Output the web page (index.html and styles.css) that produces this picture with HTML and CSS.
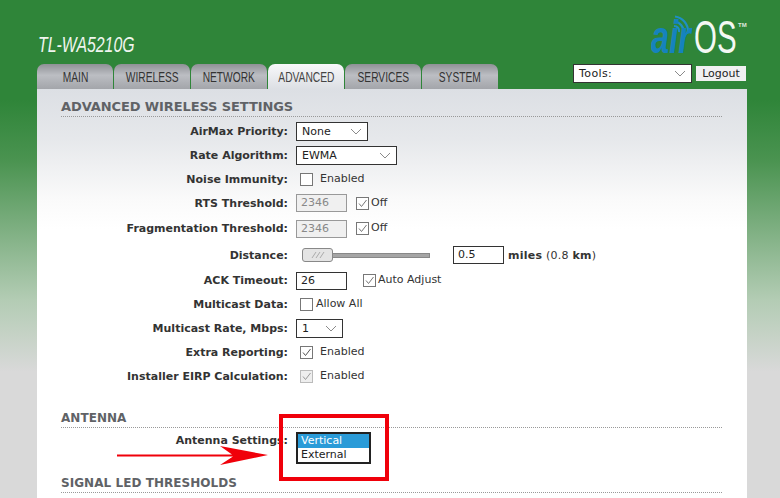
FILE: index.html
```html
<!DOCTYPE html>
<html lang="en">
<head>
<meta charset="utf-8">
<title>airOS - Advanced</title>
<link rel="stylesheet" href="styles.css">
</head>
<body>
<div class="page">
  <header class="header">
    <div class="device"><span class="device-text">TL-WA5210G</span></div>
    <div class="logo">
      <svg class="waves" width="20" height="22" viewBox="0 0 20 22"><g fill="none" stroke="#1f8fc4" stroke-width="2.2"><path d="M2 12a5 5 0 0 1 5 6"/><path d="M2 7.500a10 10 0 0 1 9.500 11"/><path d="M3 2.500a15 15 0 0 1 13 15"/></g></svg>
      <span class="logo-air"><span class="logo-air-text">air</span></span><span class="logo-os"><span class="logo-os-text">OS</span></span><span class="logo-tm">TM</span>
    </div>
  </header>
  <div class="nav">
    <div class="tabs">
      <div class="tab"><span>MAIN</span></div>
      <div class="tab"><span>WIRELESS</span></div>
      <div class="tab"><span>NETWORK</span></div>
      <div class="tab tab-active"><span>ADVANCED</span></div>
      <div class="tab"><span>SERVICES</span></div>
      <div class="tab"><span>SYSTEM</span></div>
    </div>
    <div class="tools">
      <div class="select select-tools"><span class="tools-text">Tools:</span><svg class="chev" width="12" height="7" viewBox="0 0 12 7"><path d="M1 1l5 5 5-5" fill="none" stroke="#8a8a8a"/></svg></div>
      <div class="logout">Logout</div>
    </div>
  </div>
  <main class="panel">
    <h2 class="section">ADVANCED WIRELESS SETTINGS</h2>
    <div class="rows">
      <div class="row r24"><label class="lbl">AirMax Priority:</label><div class="ctl"><div class="select s-none">None<svg class="chev" width="12" height="7" viewBox="0 0 12 7"><path d="M1 1l5 5 5-5" fill="none" stroke="#8a8a8a"/></svg></div></div></div>
      <div class="row r24"><label class="lbl">Rate Algorithm:</label><div class="ctl"><div class="select s-ewma">EWMA<svg class="chev" width="12" height="7" viewBox="0 0 12 7"><path d="M1 1l5 5 5-5" fill="none" stroke="#8a8a8a"/></svg></div></div></div>
      <div class="row r24"><label class="lbl">Noise Immunity:</label><div class="ctl ind"><span class="check"></span><span class="opt gap7">Enabled</span></div></div>
      <div class="row r24"><label class="lbl">RTS Threshold:</label><div class="ctl"><div class="input disabled">2346</div><span class="check on ml9"><svg width="11" height="11" viewBox="0 0 11 11"><path d="M2 5.500l2.500 3L9.500 2" fill="none" stroke="#777"/></svg></span><span class="opt gap2">Off</span></div></div>
      <div class="row r27"><label class="lbl">Fragmentation Threshold:</label><div class="ctl"><div class="input disabled">2346</div><span class="check on ml9"><svg width="11" height="11" viewBox="0 0 11 11"><path d="M2 5.500l2.500 3L9.500 2" fill="none" stroke="#777"/></svg></span><span class="opt gap2">Off</span></div></div>
      <div class="row r26"><label class="lbl">Distance:</label><div class="ctl slider-ctl">
        <div class="slider"><div class="track"></div><div class="thumb"><svg width="16" height="8" viewBox="0 0 16 8"><path d="M2 7l4-6M6 7l4-6M10 7l4-6" stroke="#aaa" fill="none"/></svg></div></div>
        <div class="input dist">0.5</div><span class="dist-note"><b>miles</b> (0.8 <b>km</b>)</span></div></div>
      <div class="row r25"><label class="lbl">ACK Timeout:</label><div class="ctl"><div class="input ack">26</div><span class="check on ml16"><svg width="11" height="11" viewBox="0 0 11 11"><path d="M2 5.500l2.500 3L9.500 2" fill="none" stroke="#777"/></svg></span><span class="opt gap2">Auto Adjust</span></div></div>
      <div class="row r23"><label class="lbl">Multicast Data:</label><div class="ctl ind"><span class="check"></span><span class="opt gap3">Allow All</span></div></div>
      <div class="row r24"><label class="lbl">Multicast Rate, Mbps:</label><div class="ctl"><div class="select s-rate">1<svg class="chev" width="12" height="7" viewBox="0 0 12 7"><path d="M1 1l5 5 5-5" fill="none" stroke="#8a8a8a"/></svg></div></div></div>
      <div class="row r24"><label class="lbl">Extra Reporting:</label><div class="ctl ind"><span class="check on"><svg width="11" height="11" viewBox="0 0 11 11"><path d="M2 5.500l2.500 3L9.500 2" fill="none" stroke="#555"/></svg></span><span class="opt gap7">Enabled</span></div></div>
      <div class="row r24"><label class="lbl">Installer EIRP Calculation:</label><div class="ctl ind"><span class="check on dis"><svg width="11" height="11" viewBox="0 0 11 11"><path d="M2 5.500l2.500 3L9.500 2" fill="none" stroke="#999"/></svg></span><span class="opt gap7">Enabled</span></div></div>
    </div>
    <h2 class="section sec-small sec-antenna">ANTENNA</h2>
    <div class="row r-ant"><label class="lbl lbl-ant">Antenna Settings:</label><div class="ctl ctl-ant">
      <div class="listbox"><div class="lb-item lb-sel">Vertical</div><div class="lb-item">External</div></div>
    </div></div>
    <h2 class="section sec-small">SIGNAL LED THRESHOLDS</h2>
  </main>
  <div class="callout"></div>
  <svg class="arrow" width="152" height="20" viewBox="0 0 152 20"><path d="M0 8.500H115L103 0L151 9L103 19L116 10.500H0Z" fill="#f0000a"/></svg>
</div>
</body>
</html>
```
FILE: styles.css
```css
* { box-sizing: border-box; }
html, body { margin: 0; height: 100%; overflow: hidden; }
body {
  font-family: "DejaVu Sans", Verdana, sans-serif;
  font-size: 11px;
  color: #333;
  background: linear-gradient(#2f8539 0, #2f8539 100px, #4a9350 160px, #b3ccb4 300px, #d9d9d9 372px, #d9d9d9 100%);
}
.page { position: relative; width: 780px; height: 498px; padding-left: 37px; overflow: hidden; }
.header { height: 64px; width: 710px; display: flex; justify-content: space-between; align-items: flex-end; }
.device {
  font: italic 22px/24px "Liberation Sans", sans-serif; color: #f0f5ef; margin-left: 1px; margin-bottom: 7px;
}
.device-text { display: inline-block; transform: scaleX(.72); transform-origin: left center; }
.logo { position: relative; display: flex; align-items: baseline; height: 44px; width: 95px; margin-right: 1px; margin-bottom: 5px; }
.waves { position: absolute; left: 21px; top: -1px; }
.logo-air { width: 43px; font: italic bold 46px/44px "Liberation Sans", sans-serif; color: #1583bd; white-space: nowrap; }
.logo-air-text { display: inline-block; transform: scaleX(.71); transform-origin: left center; }
.logo-os { width: 44px; font: 46px/44px "Liberation Sans", sans-serif; color: #f4f8f4; white-space: nowrap; }
.logo-os-text { display: inline-block; transform: scaleX(.64); transform-origin: left center; }
.logo-tm { font: bold 6px/8px "Liberation Sans", sans-serif; color: #dfe8df; align-self: flex-start; margin-top: 6px; }
.nav { height: 25px; width: 710px; display: flex; justify-content: space-between; }
.tabs { display: flex; gap: 1px; }
.tab {
  width: 76px; height: 25px; padding-top: 3px; border-radius: 7px 7px 0 0;
  background: linear-gradient(#8f9196, #bcbec3 45%, #a3a5aa);
  font: 14px/20px "Liberation Sans", sans-serif;
  color: #333; display: flex; justify-content: center; white-space: nowrap;
}
.tab span { display: inline-block; transform: scaleX(.73); }
.tab-active { background: linear-gradient(#f8f8fa, #dcdfe4); color: #444; }
.tools { display: flex; align-items: flex-start; gap: 4px; margin-right: 1px; }
.select {
  display: flex; align-items: center; justify-content: space-between;
  background: #fff; border: 1px solid #333; height: 19px; padding: 0 5px; color: #222;
}
.select-tools { width: 119px; }
.tools-text { letter-spacing: .4px; }
.logout { margin-top: 2px; width: 50px; height: 15px; background: #f0f0f2; color: #222; line-height: 15px; text-align: center; }
.panel {
  width: 710px; height: 420px; padding: 10px 24px 0;
  background: linear-gradient(#dcdfe4 0, #e6e8eb 50px, #fafafa 110px, #fff 140px);
}
.section {
  margin: 0; height: 18px; width: 661px; font-size: 13px; line-height: 16px; font-weight: bold; color: #606266;
  border-bottom: 1px dotted #999; font-family: "DejaVu Sans", sans-serif; letter-spacing: -.1px;
}
.sec-small { font-size: 12px; letter-spacing: .05px; }
.rows { padding-top: 2px; }
.row { display: flex; align-items: center; }
.r23 { height: 23px; } .r24 { height: 24px; } .r25 { height: 25px; } .r26 { height: 26px; } .r27 { height: 27px; }
.lbl { width: 227px; text-align: right; font-weight: bold; color: #333; }
.ctl { display: flex; align-items: center; margin-left: 8px; }
.ind { padding-left: 4px; }
.s-none { width: 72px; }
.s-ewma { width: 101px; }
.s-rate { width: 47px; }
.check { width: 13px; height: 13px; border: 1px solid #777; background: #fff; display: inline-flex; flex: none; }
.dis { border-color: #bbb; background: #eee; }
.opt { color: #333; position: relative; top: -1px; }
.gap7 { margin-left: 7px; }
.gap3 { margin-left: 3px; }
.gap2 { margin-left: 2px; }
.ml9 { margin-left: 9px; }
.ml16 { margin-left: 16px; }
.input { height: 18px; border: 1px solid #333; background: #fff; padding-left: 4px; line-height: 16px; color: #222; }
.disabled { width: 51px; background: #f0f0f0; border-color: #999; color: #888; }
.ack { width: 51px; }
.slider-ctl { margin-left: 14px; }
.slider { position: relative; width: 128px; height: 14px; display: flex; align-items: center; }
.track { width: 100%; height: 5px; background: #a5a5a5; border: 1px solid #888; }
.thumb { position: absolute; left: 0; top: 0; width: 31px; height: 14px; border: 1px solid #888; border-radius: 3px; background: #e4e4e4; display: flex; align-items: center; justify-content: center; }
.dist { width: 51px; margin-left: 23px; }
.dist-note { margin-left: 4px; letter-spacing: .25px; }
.sec-antenna { margin-top: 22px; }
.r-ant { height: 47px; align-items: flex-start; }
.lbl-ant { margin-top: 6px; }
.ctl-ant { margin-top: 4px; }
.listbox { width: 75px; height: 32px; border: 2px solid #222; background: #fff; }
.lb-item { height: 14px; line-height: 14px; padding-left: 3px; color: #222; }
.lb-sel { background: #2a9bd8; color: #fff; }
.callout { position: absolute; left: 279px; top: 414px; width: 110px; height: 67px; border: 4px solid #f0000a; }
.arrow { position: absolute; left: 117px; top: 446px; }
```
